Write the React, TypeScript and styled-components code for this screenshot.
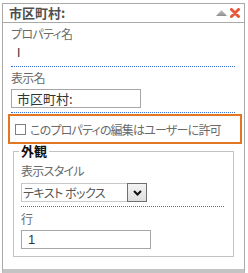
import React from "react";
import styled, { createGlobalStyle } from "styled-components";

const Global = createGlobalStyle`
  html, body { margin: 0; padding: 0; background: #fff; }
  body { font-family: "Noto Sans CJK JP", "Noto Sans", sans-serif; }
`;

const Panel = styled.div`
  box-sizing: border-box;
  width: 243px;
  margin: 3px 0 0 2px;
  border: 1px solid #a9a9a9;
  border-bottom: 5px solid #c4c4c4;
  background: #fff;
`;

const Header = styled.div`
  display: flex;
  align-items: center;
  height: 18px;
  padding: 0 4px 0 6px;
  border-bottom: 1px solid #a9a9a9;
`;

const Title = styled.div`
  flex: 1;
  font-size: 13px;
  font-weight: bold;
  line-height: 18px;
  color: #4f4f4f;
`;

const Icons = styled.div`
  display: flex;
  align-items: center;
  gap: 3px;
`;

const Body = styled.div`
  padding: 0 2px 12px 5px;
`;

const Field = styled.div<{ $top?: number; $bottom?: number }>`
  display: flex;
  flex-direction: column;
  align-items: flex-start;
  padding: ${(p) => p.$top ?? 4}px 0 ${(p) => p.$bottom ?? 4}px 0;
  border-bottom: 1px dotted #3a6fd8;
`;

const Label = styled.div<{ $gap?: number }>`
  margin-top: ${(p) => p.$gap ?? 0}px;
  font-size: 12px;
  line-height: 14px;
  letter-spacing: -0.7px;
  color: #6a6a6a;
  font-feature-settings: "palt";
`;

const Value = styled.div`
  margin-top: 5px;
  margin-left: 6px;
  font-family: "Liberation Sans", sans-serif;
  font-size: 12px;
  line-height: 14px;
  color: #333;
`;

const TextBox = styled.div<{ $width: number }>`
  box-sizing: border-box;
  width: ${(p) => p.$width}px;
  height: 19px;
  margin-top: 4px;
  padding-left: 5px;
  border: 1px solid #a6a6a6;
  font-size: 13px;
  line-height: 17px;
  color: #333;
`;

const NumBox = styled(TextBox)`
  font-family: "Liberation Sans", sans-serif;
  padding-left: 6px;
`;

const Section = styled.div`
  padding: 0 7px 0 3px;
`;

const PermitBox = styled.label`
  box-sizing: border-box;
  display: flex;
  align-items: center;
  gap: 4px;
  height: 30px;
  margin-top: 1px;
  padding-left: 5px;
  border: 2px solid #e27622;
  font-size: 12px;
  letter-spacing: -0.8px;
  color: #6a6a6a;
  font-feature-settings: "palt";
  white-space: nowrap;
`;

const Check = styled.span`
  box-sizing: border-box;
  flex: 0 0 11px;
  width: 11px;
  height: 11px;
  border: 1px solid #7f7f7f;
  background: #fff;
`;

const Group = styled.fieldset`
  margin: 0 8px 0 5px;
  padding: 0 9px 7px 7px;
  border: 1px solid #c2c2c2;
`;

const Legend = styled.legend`
  margin-left: -2px;
  padding: 0 2px;
  font-size: 13px;
  font-weight: bold;
  line-height: 14px;
  color: #111;
`;

const Select = styled.div`
  box-sizing: border-box;
  display: flex;
  align-items: center;
  width: 126px;
  height: 19px;
  margin-top: 5px;
  border: 1px solid #c8c8c8;
  font-size: 12px;
  color: #555;
  letter-spacing: -0.5px;
  font-feature-settings: "palt";
`;

const SelectText = styled.span`
  flex: 1;
  padding-left: 1px;
  line-height: 17px;
`;

const SelectButton = styled.span`
  box-sizing: border-box;
  display: flex;
  align-items: center;
  justify-content: center;
  width: 20px;
  height: 19px;
  margin: -1px -1px -1px 0;
  border: 1px solid #6f6f6f;
  background: linear-gradient(#f4f4f4, #dedede);
`;

export default function App() {
  return (
    <>
      <Global />
      <Panel>
        <Header>
          <Title>市区町村:</Title>
          <Icons>
            <svg width="11" height="6" viewBox="0 0 11 6">
              <defs>
                <linearGradient id="tri" x1="0" y1="0" x2="0" y2="1">
                  <stop offset="0" stopColor="#c8c8c8" />
                  <stop offset="1" stopColor="#8c8c8c" />
                </linearGradient>
              </defs>
              <polygon points="5.5,0 11,6 0,6" fill="url(#tri)" />
            </svg>
            <svg width="10" height="10" viewBox="0 0 10 10">
              <path d="M1.5 1.5 L8.5 8.5 M8.5 1.5 L1.5 8.5" stroke="#e65a3c" strokeWidth="3" strokeLinecap="round" />
            </svg>
          </Icons>
        </Header>
        <Body>
          <Section>
            <Field $bottom={6}>
              <Label>プロパティ名</Label>
              <Value>I</Value>
            </Field>
            <Field>
              <Label>表示名</Label>
              <TextBox $width={130}>市区町村:</TextBox>
            </Field>
          </Section>
          <PermitBox>
            <Check />
            このプロパティの編集はユーザーに許可
          </PermitBox>
          <Group>
            <Legend>外観</Legend>
            <Field $top={6}>
              <Label>表示スタイル</Label>
              <Select>
                <SelectText>テキスト ボックス</SelectText>
                <SelectButton>
                  <svg width="9" height="6" viewBox="0 0 9 6">
                    <path d="M1 1 L4.5 4.5 L8 1" stroke="#111" strokeWidth="2" fill="none" />
                  </svg>
                </SelectButton>
              </Select>
            </Field>
            <Label $gap={5}>行</Label>
            <NumBox $width={130}>1</NumBox>
          </Group>
        </Body>
      </Panel>
    </>
  );
}
